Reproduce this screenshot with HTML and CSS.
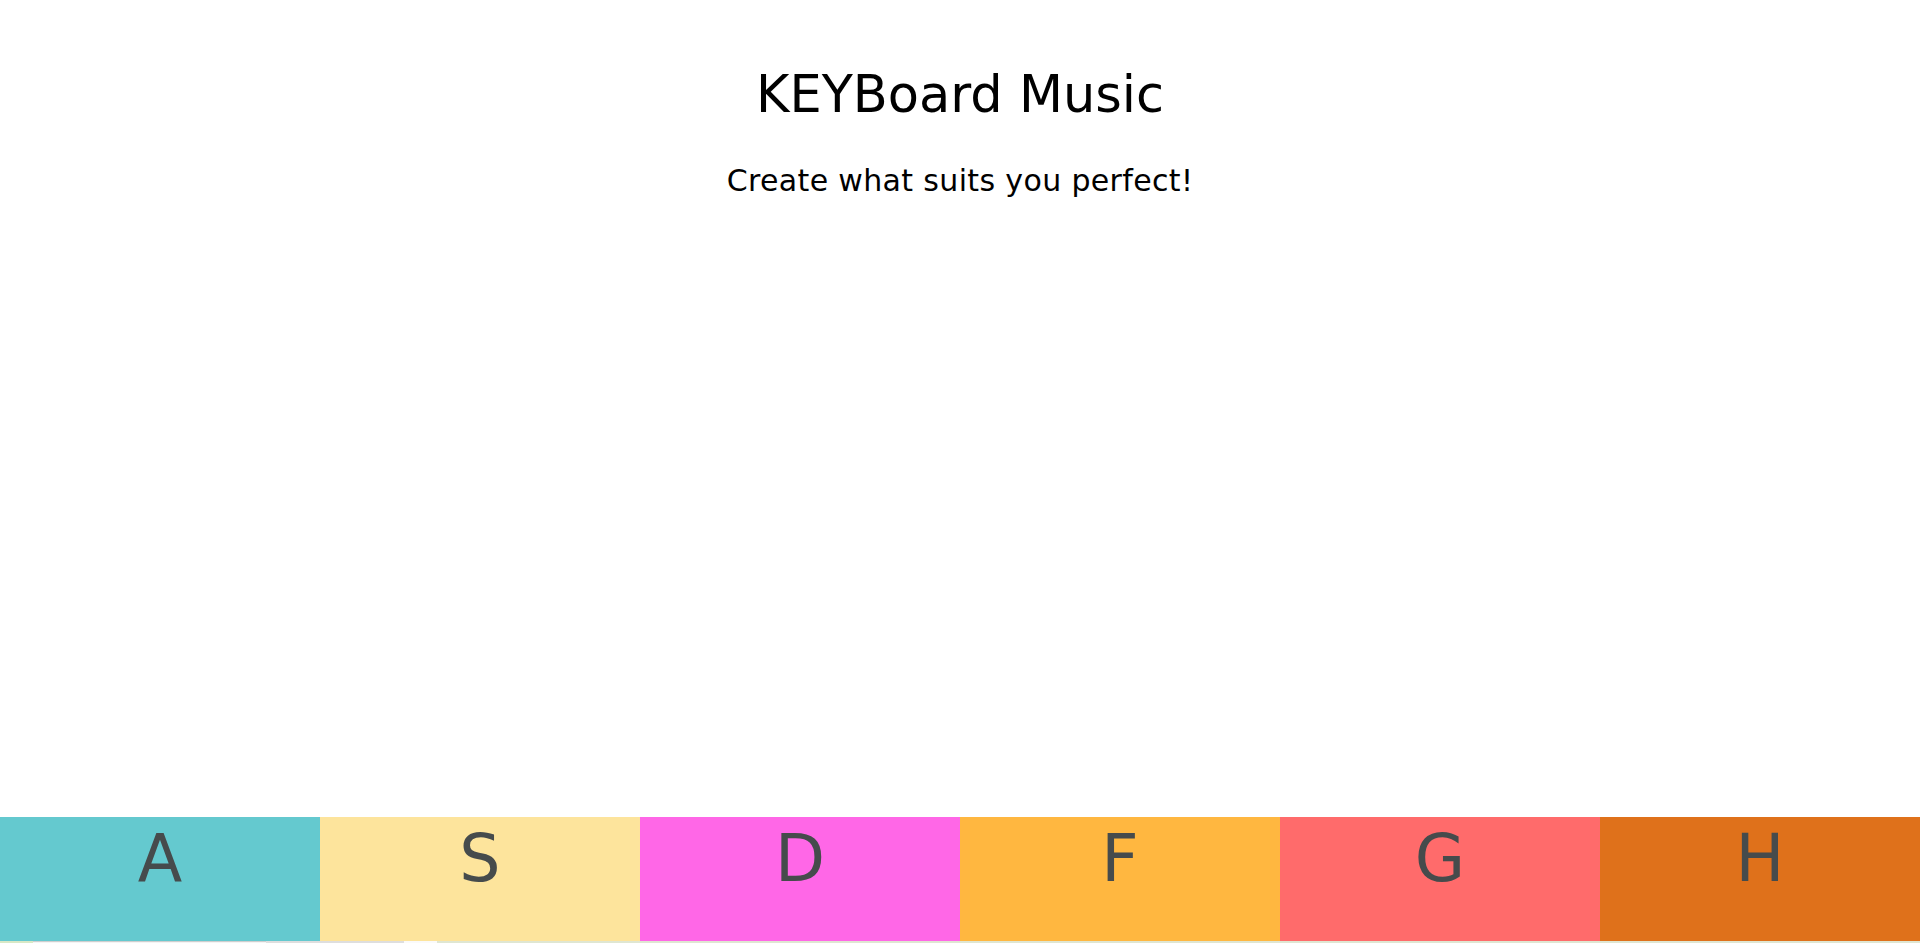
FILE: index.html
```html
<!DOCTYPE html>
<html lang="en">
<head>
<meta charset="utf-8">
<title>KEYBoard Music</title>
<link rel="stylesheet" href="styles.css">
</head>
<body>
<header class="header">
  <h1 class="title">KEYBoard Music</h1>
  <p class="subtitle">Create what suits you perfect!</p>
</header>
<div class="keys">
  <div class="key key-a">A</div>
  <div class="key key-s">S</div>
  <div class="key key-d">D</div>
  <div class="key key-f">F</div>
  <div class="key key-g">G</div>
  <div class="key key-h">H</div>
</div>
<div class="strip">
  <span class="seg seg1"></span>
  <span class="seg seg2"></span>
  <span class="seg seg3"></span>
  <span class="seg seg4"></span>
  <span class="seg seg5"></span>
</div>
</body>
</html>
```
FILE: styles.css
```css
html, body {
  margin: 0;
  padding: 0;
}
body {
  min-height: 100vh;
  display: flex;
  flex-direction: column;
  background: #fff;
  font-family: "DejaVu Sans", "Noto Sans", sans-serif;
  color: #000;
  overflow: hidden;
}
.header {
  display: flex;
  flex-direction: column;
  align-items: center;
  padding-top: 64px;
}
.title {
  margin: 0;
  font-size: 51px;
  font-weight: 400;
  line-height: 1.2;
}
.subtitle {
  margin: 38px 0 0;
  font-size: 30px;
  font-weight: 400;
  letter-spacing: 0.35px;
  line-height: 1.2;
}
.keys {
  margin-top: auto;
  display: flex;
  height: 124px;
}
.key {
  flex: 1;
  text-align: center;
  font-size: 65px;
  line-height: 1;
  padding-top: 9px;
  color: #464b4c;
  box-sizing: border-box;
}
.key-a { background: #64c9cf; }
.key-s { background: #fde49c; }
.key-d { background: #ff67e7; }
.key-f { background: #ffb740; }
.key-g { background: #ff6b6b; }
.key-h { background: #df711b; }
.strip {
  display: flex;
  height: 2px;
  background: #dfe6d2;
}
.seg { display: block; height: 2px; }
.seg1 { width: 33px; background: #d8e8c6; }
.seg2 { width: 233px; background: #f4f4f4; border-top: 1px solid #cfcfcf; box-sizing: border-box; }
.seg3 { width: 138px; background: #dedede; }
.seg4 { width: 33px; background: #fafafa; }
.seg5 { flex: 1; background: #dfe6d2; }
```
